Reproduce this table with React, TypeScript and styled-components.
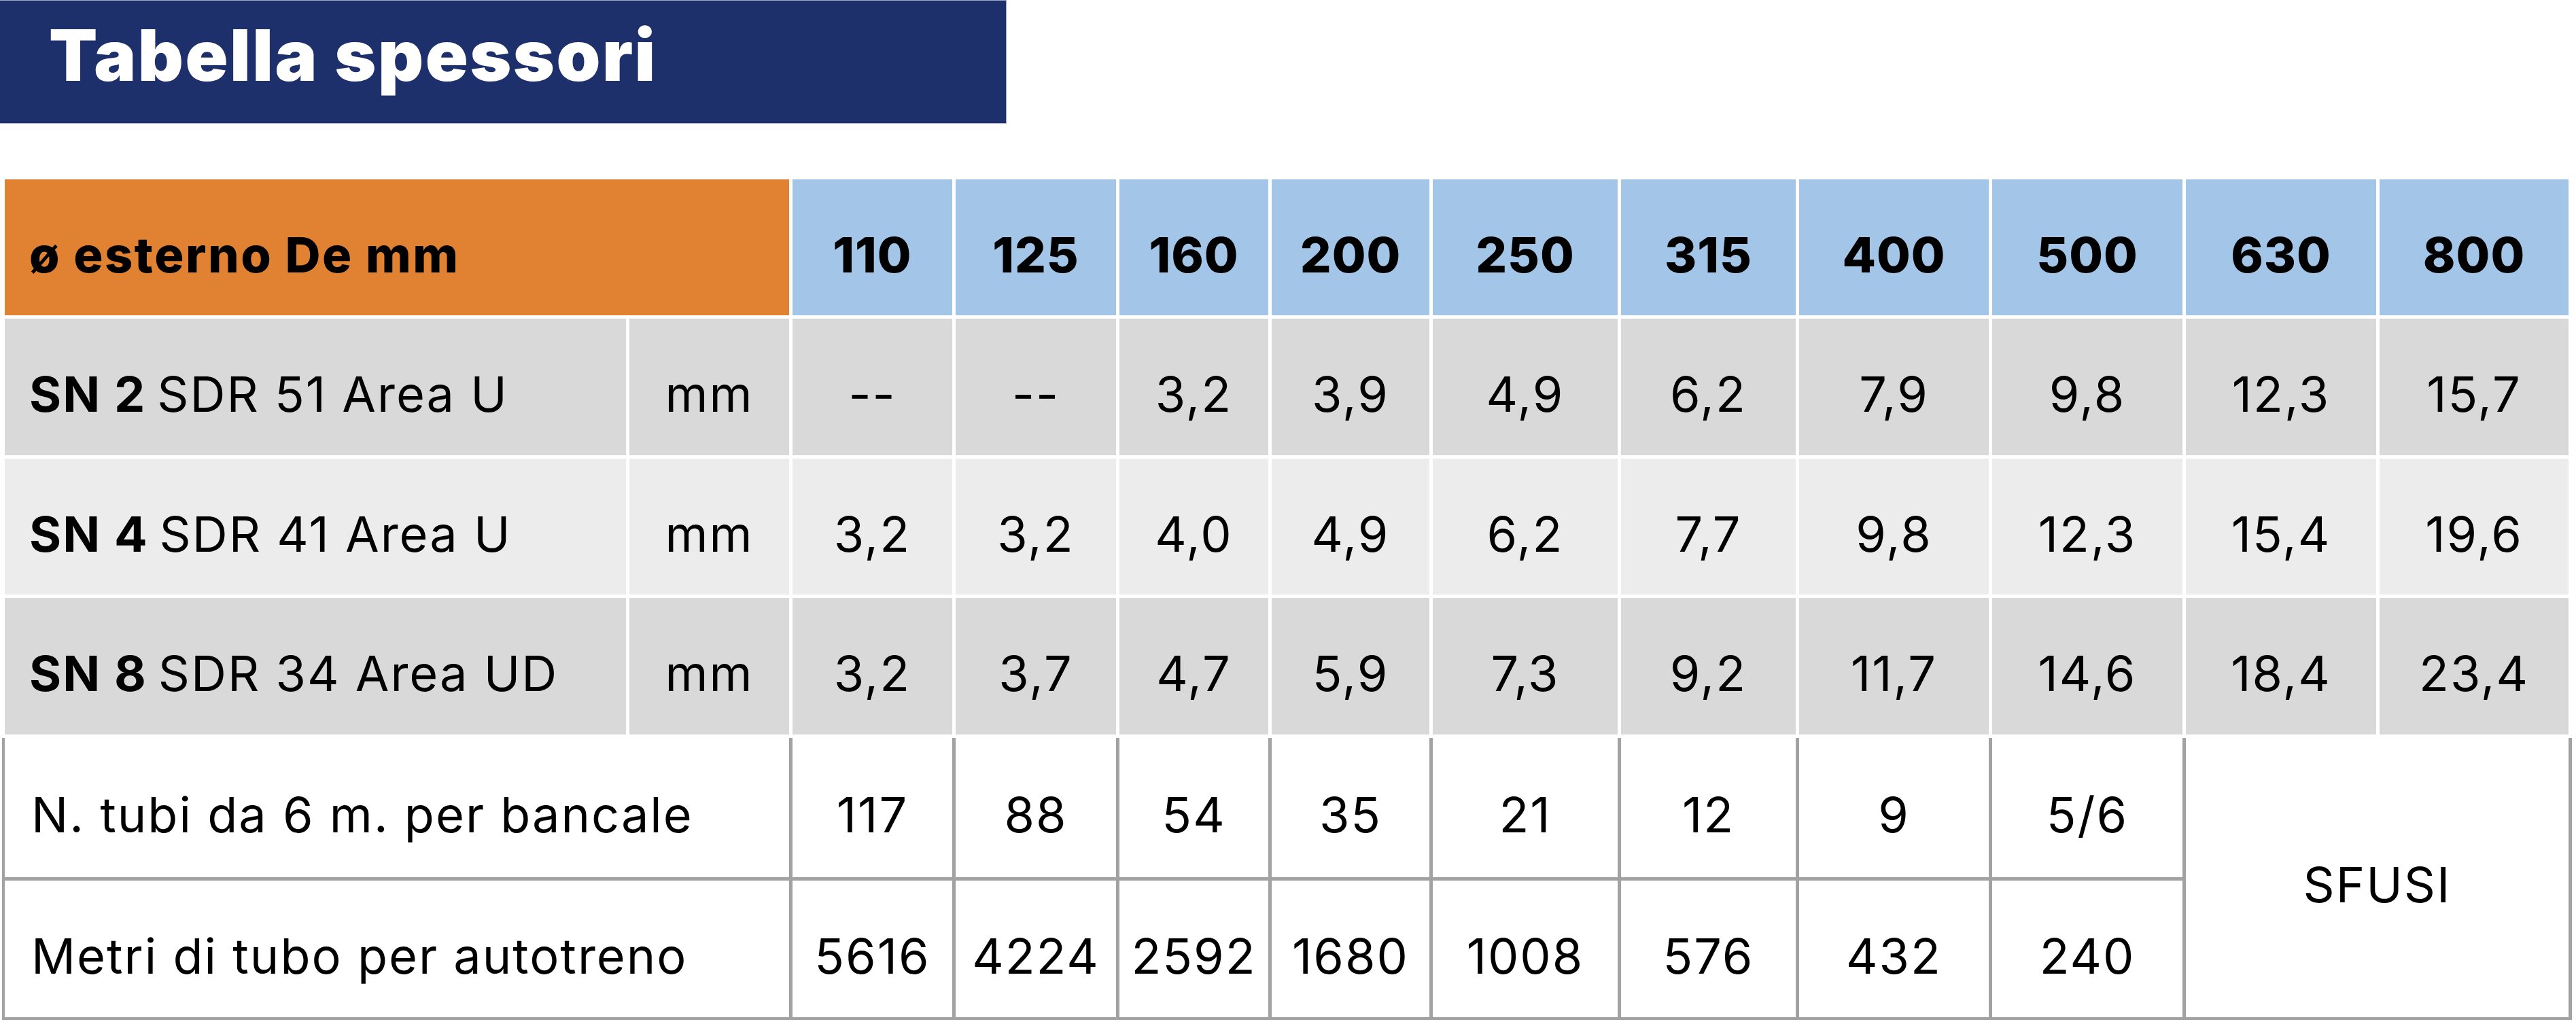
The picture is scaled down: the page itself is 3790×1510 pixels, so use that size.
import React from "react";
import styled, { createGlobalStyle } from "styled-components";

const GlobalStyle = createGlobalStyle`
  html, body {
    margin: 0;
    padding: 0;
    background: #ffffff;
  }
  body {
    font-family: "Inter", "Open Sans", "Liberation Sans", sans-serif;
    color: #000;
  }
`;

const COLUMNS =
  "914px 235px 235px 236px 219px 232px 272px 257px 279px 280px 280px 278px";

const Page = styled.div`
  width: 3790px;
  height: 1510px;
  overflow: hidden;
`;

const TitleBar = styled.div`
  box-sizing: border-box;
  width: 1481px;
  height: 182px;
  background: #1e306c;
  border: 1px solid #a3a5c6;
  border-left: none;
  display: flex;
  align-items: center;
  padding: 0 0 20px 72px;
`;

const TitleText = styled.h1`
  margin: 0;
  font-family: "Inter", "Liberation Sans", sans-serif;
  font-weight: 900;
  font-size: 104px;
  letter-spacing: 2.5px;
  color: #ffffff;
  line-height: 1;
`;

const TableWrap = styled.div`
  margin: 82px 0 0 7px;
  width: 3773px;
`;

const UpperGrid = styled.div`
  display: grid;
  grid-template-columns: ${COLUMNS};
  grid-template-rows: 200px 201px 200px 201px;
  gap: 5px;
`;

const Cell = styled.div<{ $bg?: string; $align?: "left" | "center" }>`
  box-sizing: border-box;
  display: flex;
  align-items: center;
  justify-content: ${(p) => (p.$align === "left" ? "flex-start" : "center")};
  padding-top: 20px;
  padding-left: ${(p) => (p.$align === "left" ? "36px" : "0")};
  background: ${(p) => p.$bg || "#ffffff"};
  font-size: 72px;
  font-weight: 400;
  letter-spacing: 2px;
  white-space: nowrap;
`;

const HeadLabel = styled(Cell)`
  grid-column: span 2;
  font-weight: 800;
  letter-spacing: 2.5px;
`;

const HeadCell = styled(Cell)`
  font-weight: 800;
  letter-spacing: 1px;
`;

const Strong = styled.b`
  font-weight: 700;
  margin-right: 0.22em;
`;

const LowerGrid = styled.div`
  display: grid;
  grid-template-columns: ${COLUMNS};
  grid-template-rows: 205px 201px;
  gap: 5px;
  margin: 5px -4px 0 -4px;
  padding: 0 4px 4px 4px;
  background: #a2a2a2;
`;

const WideCell = styled(Cell)`
  grid-column: span 2;
  padding-left: 39px;
`;

const BulkCell = styled(Cell)`
  grid-column: span 2;
  grid-row: span 2;
`;

const sizes = ["110", "125", "160", "200", "250", "315", "400", "500", "630", "800"];

const rows = [
  {
    sn: "SN 2",
    rest: "SDR 51 Area U",
    bg: "#d9d9d9",
    values: ["--", "--", "3,2", "3,9", "4,9", "6,2", "7,9", "9,8", "12,3", "15,7"],
  },
  {
    sn: "SN 4",
    rest: "SDR 41 Area U",
    bg: "#ececec",
    values: ["3,2", "3,2", "4,0", "4,9", "6,2", "7,7", "9,8", "12,3", "15,4", "19,6"],
  },
  {
    sn: "SN 8",
    rest: "SDR 34 Area UD",
    bg: "#d9d9d9",
    values: ["3,2", "3,7", "4,7", "5,9", "7,3", "9,2", "11,7", "14,6", "18,4", "23,4"],
  },
];

const pallets = ["117", "88", "54", "35", "21", "12", "9", "5/6"];
const metres = ["5616", "4224", "2592", "1680", "1008", "576", "432", "240"];

const App = (): JSX.Element => {
  return (
    <Page>
      <GlobalStyle />
      <TitleBar>
        <TitleText>Tabella spessori</TitleText>
      </TitleBar>
      <TableWrap>
        <UpperGrid>
          <HeadLabel $bg="#e08231" $align="left">
            ø esterno De mm
          </HeadLabel>
          {sizes.map((s) => (
            <HeadCell key={s} $bg="#a3c6e8">
              {s}
            </HeadCell>
          ))}
          {rows.map((r) => (
            <React.Fragment key={r.sn}>
              <Cell $bg={r.bg} $align="left">
                <Strong>{r.sn}</Strong>
                {r.rest}
              </Cell>
              <Cell $bg={r.bg}>mm</Cell>
              {r.values.map((v, i) => (
                <Cell key={i} $bg={r.bg}>
                  {v}
                </Cell>
              ))}
            </React.Fragment>
          ))}
        </UpperGrid>
        <LowerGrid>
          <WideCell $align="left">N. tubi da 6 m. per bancale</WideCell>
          {pallets.map((v, i) => (
            <Cell key={i}>{v}</Cell>
          ))}
          <BulkCell>SFUSI</BulkCell>
          <WideCell $align="left">Metri di tubo per autotreno</WideCell>
          {metres.map((v, i) => (
            <Cell key={i}>{v}</Cell>
          ))}
        </LowerGrid>
      </TableWrap>
    </Page>
  );
};

export default App;
